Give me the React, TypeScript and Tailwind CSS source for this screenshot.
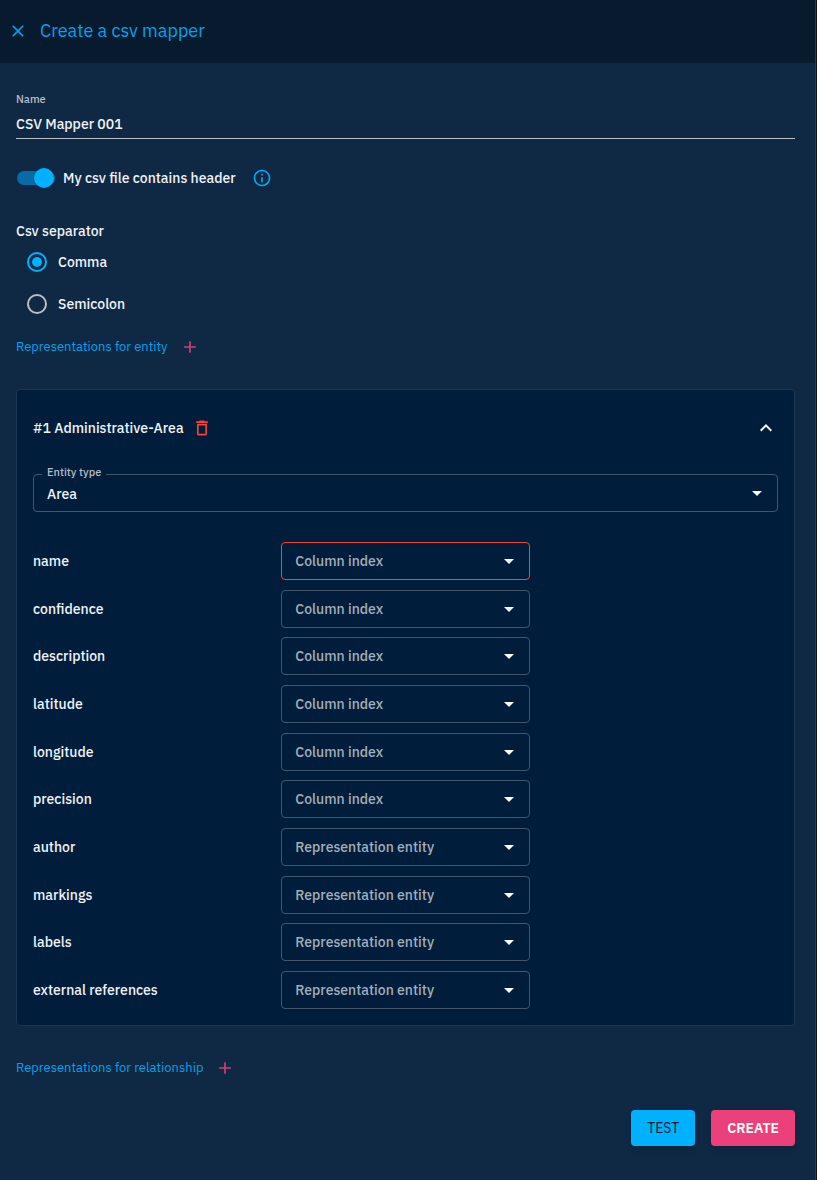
import { useState } from "react";

const attributes = [
  { name: "name", placeholder: "Column index", required: true },
  { name: "confidence", placeholder: "Column index" },
  { name: "description", placeholder: "Column index" },
  { name: "latitude", placeholder: "Column index" },
  { name: "longitude", placeholder: "Column index" },
  { name: "precision", placeholder: "Column index" },
  { name: "author", placeholder: "Representation entity" },
  { name: "markings", placeholder: "Representation entity" },
  { name: "labels", placeholder: "Representation entity" },
  { name: "external references", placeholder: "Representation entity" },
];

function Icon({ d, className }: { d: string; className: string }) {
  return (
    <svg viewBox="0 0 24 24" fill="currentColor" aria-hidden="true" className={className}>
      <path d={d} />
    </svg>
  );
}

const icons = {
  close: "M19 6.41 17.59 5 12 10.59 6.41 5 5 6.41 10.59 12 5 17.59 6.41 19 12 13.41 17.59 19 19 17.59 13.41 12z",
  info: "M11 7h2v2h-2zm0 4h2v6h-2zm1-9C6.48 2 2 6.48 2 12s4.48 10 10 10 10-4.48 10-10S17.52 2 12 2m0 18c-4.41 0-8-3.59-8-8s3.59-8 8-8 8 3.59 8 8-3.59 8-8 8",
  add: "M19 13h-6v6h-2v-6H5v-2h6V5h2v6h6z",
  trash: "M6 19c0 1.1.9 2 2 2h8c1.1 0 2-.9 2-2V7H6zM8 9h8v10H8zm7.5-5-1-1h-5l-1 1H5v2h14V4z",
  up: "m12 8-6 6 1.41 1.41L12 10.83l4.59 4.58L18 14z",
  caret: "m7 10 5 5 5-5z",
};

function Caret() {
  return <Icon d={icons.caret} className="pointer-events-none absolute right-[9px] top-1/2 size-6 -translate-y-1/2 text-white" />;
}

function SectionTitle({ text }: { text: string }) {
  return (
    <div className="flex h-5 items-center gap-3 text-[13px] font-normal text-[#00a3ec]">
      <h2>{text}</h2>
      <button type="button" aria-label={"Add: " + text} className="text-[#d43d77]">
        <Icon d={icons.add} className="size-5" />
      </button>
    </div>
  );
}

export default function App() {
  const [header, setHeader] = useState(true);
  const [separator, setSeparator] = useState("Comma");
  const [open, setOpen] = useState(true);

  return (
    <div className="min-h-screen bg-[#121214] pr-px font-['IBM_Plex_Sans','Inter',sans-serif] text-sm font-medium text-[#f0f3f6]">
      <div className="min-h-screen border-r border-[#3a3836] bg-[#0f2944]">
        <header className="flex h-[63px] items-center gap-3 bg-[#071a2e] px-2 pb-0.5 font-normal text-[#00a3ec]">
          <button type="button" aria-label="Close">
            <Icon d={icons.close} className="size-5" />
          </button>
          <h1 className="text-lg">Create a csv mapper</h1>
        </header>

        <form className="pt-7 pr-5 pb-8 pl-4" onSubmit={(e) => e.preventDefault()}>
          <label htmlFor="mapper-name" className="block h-4 text-[11px] leading-4 text-[#b7bfc7]">
            Name
          </label>
          <input
            id="mapper-name"
            defaultValue="CSV Mapper 001"
            className="mt-0.5 block h-[30px] w-full border-b border-[#b7bfc7] bg-transparent outline-none"
          />

          <div className="mt-[29px] flex h-5 items-center gap-4">
            <label className="flex items-center gap-2">
              <input
                type="checkbox"
                role="switch"
                checked={header}
                onChange={(e) => setHeader(e.target.checked)}
                className="relative ml-px h-5 w-[38px] appearance-none before:absolute before:inset-x-0 before:inset-y-[3px] before:rounded-full before:bg-[#076ca5] after:absolute after:left-0 after:size-5 after:rounded-full after:bg-[#00b1ff] after:shadow checked:after:left-[17px]"
              />
              My csv file contains header
            </label>
            <Icon d={icons.info} className="size-5 text-[#00a8f2]" />
          </div>

          <fieldset className="mt-[33px]">
            <legend className="h-5 leading-5">Csv separator</legend>
            {["Comma", "Semicolon"].map((option) => (
              <label key={option} className="flex h-[42px] items-center gap-[11px] pl-[11px]">
                <input
                  type="radio"
                  name="separator"
                  checked={separator === option}
                  onChange={() => setSeparator(option)}
                  className="grid size-5 appearance-none place-items-center rounded-full border-2 border-[#b7bfc7] checked:border-[#00b1ff] checked:before:size-2.5 checked:before:rounded-full checked:before:bg-[#00b1ff]"
                />
                {option}
              </label>
            ))}
          </fieldset>

          <div className="mt-3">
            <SectionTitle text="Representations for entity" />
          </div>

          <section className="mt-8 rounded border border-[#1c3651] bg-[#001e3c] px-4 pt-7 pb-4">
            <div className="flex h-5 items-center gap-2">
              <h3>#1 Administrative-Area</h3>
              <button type="button" aria-label="Delete representation" className="text-[#f44336]">
                <Icon d={icons.trash} className="size-5" />
              </button>
              <button type="button" aria-label="Toggle representation" aria-expanded={open} onClick={() => setOpen(!open)} className="ml-auto">
                <Icon d={icons.up} className="size-6 text-white" />
              </button>
            </div>

            {open && (
              <>
                <div className="relative mt-9">
                  <label htmlFor="entity-type" className="absolute -top-2.5 left-[9px] bg-[#001e3c] px-[5px] text-[11px] leading-4 text-[#b2bcc6]">
                    Entity type
                  </label>
                  <select id="entity-type" className="block h-[38px] w-full appearance-none rounded border border-[#40566d] bg-transparent px-[13px] pt-0.5 outline-none">
                    <option>Area</option>
                  </select>
                  <Caret />
                </div>

                <div className="mt-[30px] flex min-h-[467px] flex-col justify-between">
                  {attributes.map((attribute) => (
                    <div key={attribute.name} className="grid grid-cols-3 items-center">
                      <label htmlFor={attribute.name}>{attribute.name}</label>
                      <div className="relative">
                        <select
                          id={attribute.name}
                          className={
                            "block h-[38px] w-full appearance-none rounded border bg-transparent px-[13px] text-[#a3aebb] outline-none " +
                            (attribute.required ? "border-[#f44336]" : "border-[#40566d]")
                          }
                        >
                          <option>{attribute.placeholder}</option>
                        </select>
                        <Caret />
                      </div>
                    </div>
                  ))}
                </div>
              </>
            )}
          </section>

          <div className="mt-8">
            <SectionTitle text="Representations for relationship" />
          </div>

          <div className="mt-8 flex justify-end gap-4">
            <button type="button" className="h-9 rounded bg-[#00b1ff] px-4 font-normal text-[#071a2e] shadow-md">
              TEST
            </button>
            <button type="submit" className="h-9 rounded bg-[#ec407a] px-4 font-semibold text-white shadow-md">
              CREATE
            </button>
          </div>
        </form>
      </div>
    </div>
  );
}
